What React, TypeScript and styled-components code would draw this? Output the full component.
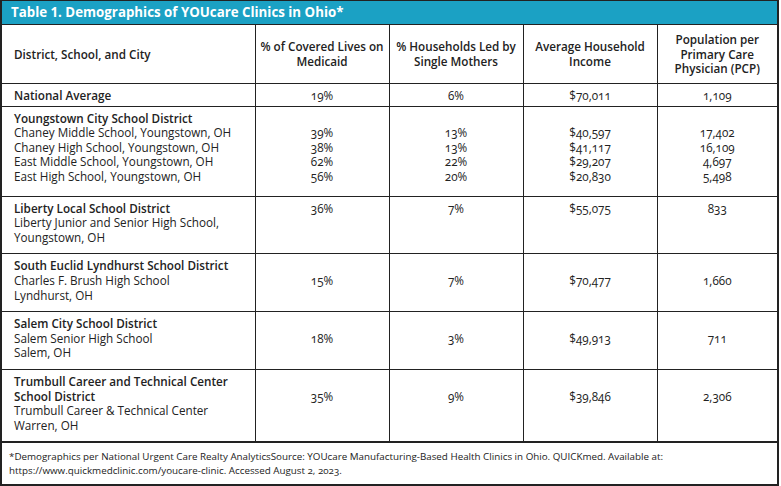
import React from "react";
import styled, { createGlobalStyle } from "styled-components";

const Global = createGlobalStyle`
  html, body { margin: 0; padding: 0; background: #fff; }
  body { font-family: "Open Sans", "Noto Sans", sans-serif; color: #222; }
`;

const Frame = styled.div`
  width: 781px;
  height: 486px;
  box-sizing: border-box;
  background: #fff;
`;

const Box = styled.div`
  width: 779px;
  box-sizing: border-box;
  border: 1px solid #222;
  border-left-width: 2px;
  border-right-width: 2px;
  border-bottom-width: 2px;
`;

const TitleBar = styled.div`
  height: 23px;
  background: #1ba1c4;
  color: #fff;
  font-weight: 700;
  font-size: 13.3px;
  line-height: 23px;
  padding-left: 9px;
  border-bottom: 1px solid #222;
`;

const Table = styled.table`
  width: 100%;
  border-collapse: collapse;
  table-layout: fixed;
  font-size: 11.7px;
  line-height: 14.6px;
  font-variant-numeric: oldstyle-nums;
`;

const HeadCell = styled.th<{ $left?: boolean }>`
  height: 58px;
  padding: 0 3px 0 ${(p) => (p.$left ? "12px" : "3px")};
  border-left: ${(p) => (p.$left ? "none" : "1px solid #222")};
  border-bottom: 1px solid #222;
  text-align: ${(p) => (p.$left ? "left" : "center")};
  vertical-align: middle;
  font-weight: 600;
  font-size: 11.7px;
  line-height: 14.6px;
`;

const Row = styled.tr<{ $pb: number }>`
  border-bottom: 1px solid #222;
  & > td {
    padding-top: 4px;
    padding-bottom: ${(p) => p.$pb}px;
  }
`;

const NameCell = styled.td`
  padding-left: 12px;
  padding-right: 4px;
  vertical-align: top;
`;

const ValueCell = styled.td<{ $offset: number }>`
  border-left: 1px solid #222;
  text-align: center;
  vertical-align: top;
  & > div:first-child {
    margin-top: ${(p) => p.$offset * 14.6}px;
  }
`;

const Line = styled.div<{ $bold?: boolean }>`
  font-weight: ${(p) => (p.$bold ? 600 : 400)};
  white-space: nowrap;
`;

const Footer = styled.div`
  border-top: 1px solid #222;
  padding: 7px 8px 6px 7px;
  font-size: 9.8px;
  line-height: 14px;
  font-variant-numeric: oldstyle-nums;
`;

type Group = {
  bold: string[];
  lines: string[];
  offset: number;
  pb: number;
  values: string[][];
};

const groups: Group[] = [
  {
    bold: ["National Average"],
    lines: [],
    offset: 0,
    pb: 3,
    values: [["19%"], ["6%"], ["$70,011"], ["1,109"]],
  },
  {
    bold: ["Youngstown City School District"],
    lines: [
      "Chaney Middle School, Youngstown, OH",
      "Chaney High School, Youngstown, OH",
      "East Middle School, Youngstown, OH",
      "East High School, Youngstown, OH",
    ],
    offset: 1,
    pb: 12,
    values: [
      ["39%", "38%", "62%", "56%"],
      ["13%", "13%", "22%", "20%"],
      ["$40,597", "$41,117", "$29,207", "$20,830"],
      ["17,402", "16,109", "4,697", "5,498"],
    ],
  },
  {
    bold: ["Liberty Local School District"],
    lines: ["Liberty Junior and Senior High School,", "Youngstown, OH"],
    offset: 0,
    pb: 9,
    values: [["36%"], ["7%"], ["$55,075"], ["833"]],
  },
  {
    bold: ["South Euclid Lyndhurst School District"],
    lines: ["Charles F. Brush High School", "Lyndhurst, OH"],
    offset: 1,
    pb: 9,
    values: [["15%"], ["7%"], ["$70,477"], ["1,660"]],
  },
  {
    bold: ["Salem City School District"],
    lines: ["Salem Senior High School", "Salem, OH"],
    offset: 1,
    pb: 9,
    values: [["18%"], ["3%"], ["$49,913"], ["711"]],
  },
  {
    bold: ["Trumbull Career and Technical Center", "School District"],
    lines: ["Trumbull Career & Technical Center", "Warren, OH"],
    offset: 1,
    pb: 9,
    values: [["35%"], ["9%"], ["$39,846"], ["2,306"]],
  },
];

export default function App() {
  return (
    <Frame>
      <Global />
      <Box>
        <TitleBar>Table 1. Demographics of YOUcare Clinics in Ohio*</TitleBar>
        <Table>
          <colgroup>
            <col style={{ width: 253 }} />
            <col style={{ width: 134 }} />
            <col style={{ width: 134 }} />
            <col style={{ width: 134 }} />
            <col />
          </colgroup>
          <thead>
            <tr>
              <HeadCell $left>District, School, and City</HeadCell>
              <HeadCell>% of Covered Lives on Medicaid</HeadCell>
              <HeadCell>% Households Led by Single Mothers</HeadCell>
              <HeadCell>Average Household Income</HeadCell>
              <HeadCell>Population per Primary Care Physician (PCP)</HeadCell>
            </tr>
          </thead>
          <tbody>
            {groups.map((g, i) => (
              <Row key={i} $pb={g.pb}>
                <NameCell>
                  {g.bold.map((b) => (
                    <Line key={b} $bold>
                      {b}
                    </Line>
                  ))}
                  {g.lines.map((l) => (
                    <Line key={l}>{l}</Line>
                  ))}
                </NameCell>
                {g.values.map((col, j) => (
                  <ValueCell key={j} $offset={g.offset}>
                    {col.map((v, k) => (
                      <Line key={k}>{v}</Line>
                    ))}
                  </ValueCell>
                ))}
              </Row>
            ))}
          </tbody>
        </Table>
        <Footer>
          *Demographics per National Urgent Care Realty AnalyticsSource: YOUcare
          Manufacturing-Based Health Clinics in Ohio. QUICKmed. Available at:
          <br />
          https://www.quickmedclinic.com/youcare-clinic. Accessed August 2, 2023.
        </Footer>
      </Box>
    </Frame>
  );
}
